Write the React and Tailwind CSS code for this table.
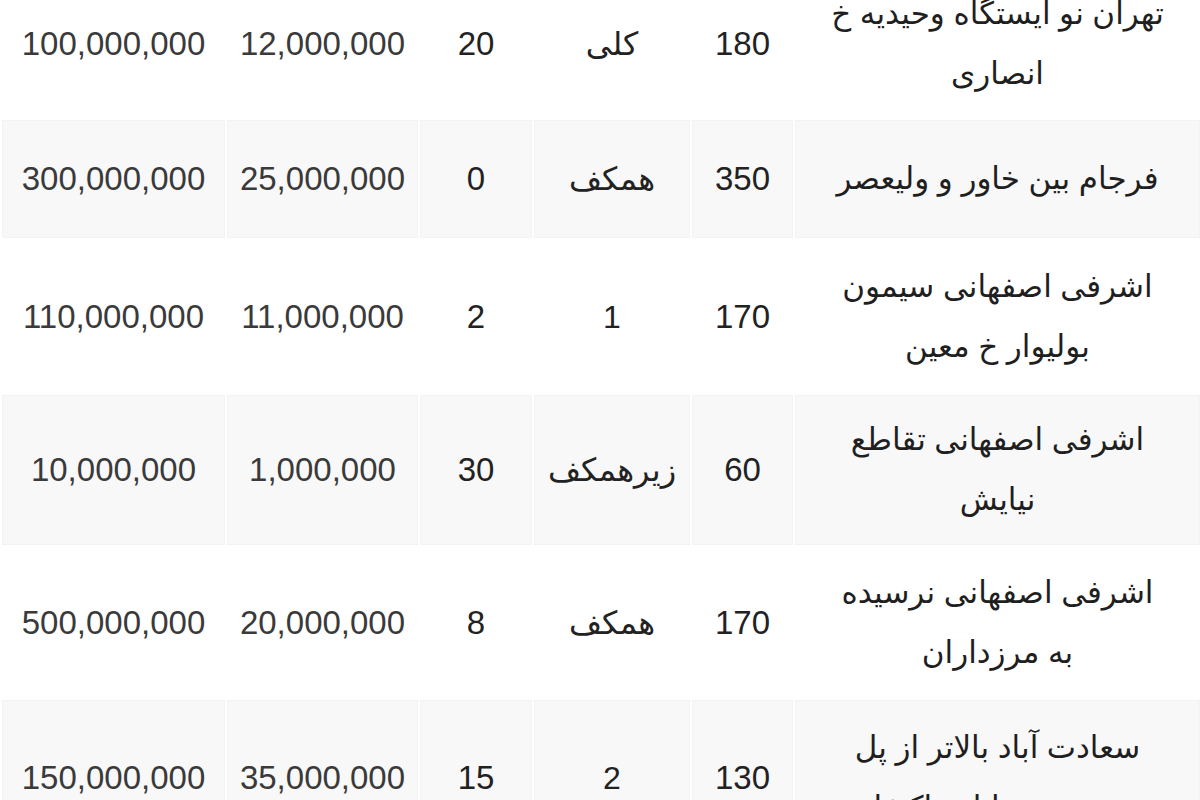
import React from 'react'

const rows = [
  { price: '100,000,000', rent: '12,000,000', age: '20', floor: 'کلی', area: '180', address: ['تهران نو ایستگاه وحیدیه خ', 'انصاری'], h: 'h-[152px]' },
  { price: '300,000,000', rent: '25,000,000', age: '0', floor: 'همکف', area: '350', address: ['فرجام بین خاور و ولیعصر'], h: 'h-[118px]' },
  { price: '110,000,000', rent: '11,000,000', age: '2', floor: '1', area: '170', address: ['اشرفی اصفهانی سیمون', 'بولیوار خ معین'], h: 'h-[157px]' },
  { price: '10,000,000', rent: '1,000,000', age: '30', floor: 'زیرهمکف', area: '60', address: ['اشرفی اصفهانی تقاطع', 'نیایش'], h: 'h-[150px]' },
  { price: '500,000,000', rent: '20,000,000', age: '8', floor: 'همکف', area: '170', address: ['اشرفی اصفهانی نرسیده', 'به مرزداران'], h: 'h-[155px]' },
  { price: '150,000,000', rent: '35,000,000', age: '15', floor: '2', area: '130', address: ['سعادت آباد بالاتر از پل', 'مدیریت خیابان پاکنژاد'], h: 'h-[155px]' }
]

const font = { fontFamily: '"Liberation Sans", "DejaVu Sans", sans-serif' }

const App = () => {
  return (
    <div className="w-[1200px] h-[800px] overflow-hidden bg-white" style={font}>
      <table className="-mt-[32px] w-[1200px] table-fixed border-collapse text-[#3a3a3a]">
        <colgroup>
          <col className="w-[225px]" />
          <col className="w-[193px]" />
          <col className="w-[114px]" />
          <col className="w-[158px]" />
          <col className="w-[103px]" />
          <col className="w-[407px]" />
        </colgroup>
        <tbody>
          {rows.map((row, i) => {
            const gray = i % 2 === 1
            const cell = gray
              ? 'border-x-2 border-white bg-[#f8f8f8] shadow-[inset_0_0_0_1px_#f3f3f3] text-center align-middle p-0'
              : 'text-center align-middle p-0'
            return (
              <tr key={i} className={row.h}>
                <td className={cell + ' text-[33px]'}>{row.price}</td>
                <td className={cell + ' text-[33px]'}>{row.rent}</td>
                <td className={cell + ' text-[33px] text-[#222]'}>{row.age}</td>
                <td className={cell + ' text-[32px] text-[#222]'} dir="rtl">{row.floor}</td>
                <td className={cell + ' text-[33px] text-[#222]'}>{row.area}</td>
                <td className={cell + ' text-[31px] leading-[60px] text-[#1f1f1f]'} dir="rtl">
                  {row.address.map((line, j) => (
                    <div key={j} className="whitespace-nowrap">{line}</div>
                  ))}
                </td>
              </tr>
            )
          })}
        </tbody>
      </table>
    </div>
  )
}

export default App
